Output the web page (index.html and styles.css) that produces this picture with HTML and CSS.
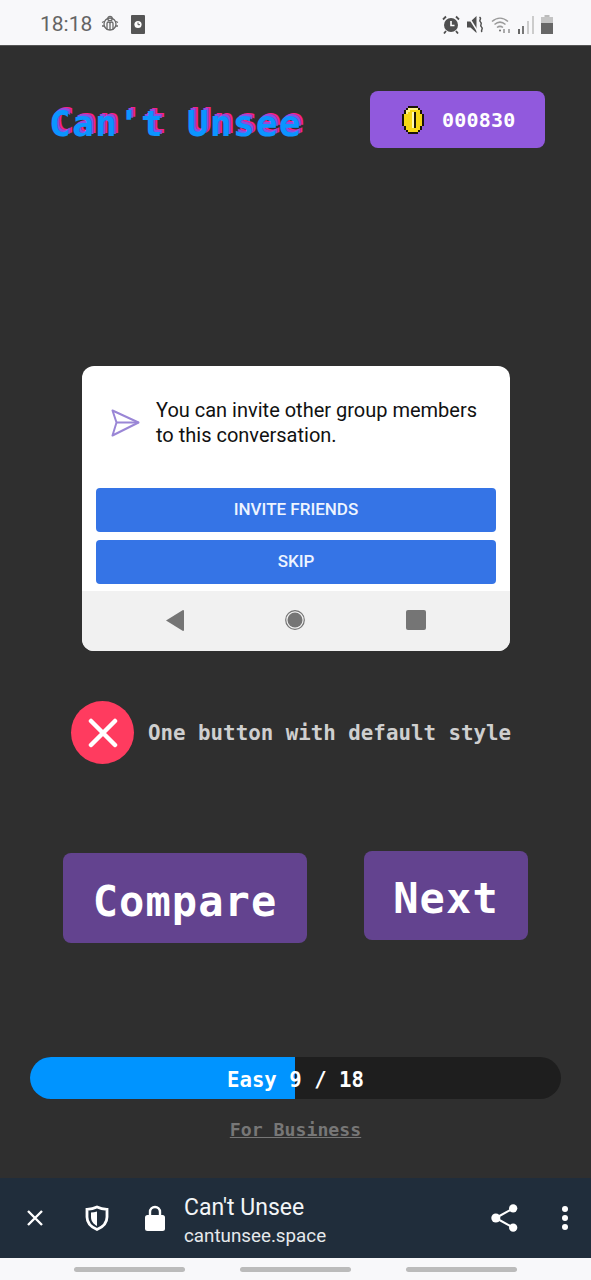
FILE: index.html
```html
<!DOCTYPE html>
<html lang="en">
<head>
  <meta charset="UTF-8">
  <title>Can't Unsee</title>
  <link rel="stylesheet" href="styles.css">
</head>
<body>

<!-- Android status bar -->
<div class="status-bar">
  <span class="hora">18:18</span>
  <svg class="st-gear" width="18" height="18" viewBox="0 0 18 18" fill="none" stroke="#6a6a6a" stroke-width="1.3">
    <circle cx="9" cy="9" r="6"/>
    <circle cx="9" cy="3.5" r="2.2"/>
    <path d="M6 15V8.5a1.5 1.5 0 0 1 3 0a1.5 1.5 0 0 1 3 0V15M9 8.5V15M1 7.5l2-1M1 11l2 0M17 7.5l-2-1M17 11l-2 0"/>
  </svg>
  <svg class="st-clock" width="14" height="19" viewBox="0 0 14 19">
    <rect width="14" height="19" rx="1" fill="#555"/>
    <circle cx="7" cy="9.5" r="3.6" fill="#fff"/>
    <path d="M7 7.5v2.2h2" stroke="#555" stroke-width="1" fill="none"/>
  </svg>
  <div class="st-derecha">
    <svg width="18" height="19" viewBox="0 0 18 19">
      <circle cx="9" cy="10" r="7" fill="#4f4f4f"/>
      <path d="M9 6v4.5h3.5" stroke="#fff" stroke-width="1.6" fill="none"/>
      <path d="M1 4.500L4 1.500M17 4.500L14 1.500M4 16l-2 2.500M14 16l2 2.500" stroke="#4f4f4f" stroke-width="1.800"/>
    </svg>
    <svg width="17" height="19" viewBox="0 0 17 19">
      <path d="M0 6.500h3.500L9.500 1v17L3.500 12.500H0z" fill="#4f4f4f"/>
      <path d="M1 1l10 16" stroke="#f8f8fa" stroke-width="1.500"/>
      <path d="M12.500 2c3 2-1.500 3 1 5s-1.500 3 1 5s-1.500 3 0.500 5" stroke="#4f4f4f" stroke-width="1.500" fill="none"/>
    </svg>
    <svg width="20" height="19" viewBox="0 0 20 19" fill="none" stroke="#9a9a9a" stroke-width="1.500">
      <path d="M1 6.500c5-4.500 11-4.500 16 0M3.500 9.500c3.500-3 7.500-3 11 0M6 12.500c2-1.500 4-1.500 6 0"/>
      <circle cx="9" cy="15.500" r="1" fill="#6a6a6a" stroke="none"/>
      <path d="M13 14v4M18 18v-4" stroke="#777" stroke-width="1.200"/>
    </svg>
    <svg width="16" height="19" viewBox="0 0 16 19">
      <rect x="0" y="14" width="2" height="5" fill="#666"/>
      <rect x="4" y="11" width="2" height="8" fill="#777"/>
      <rect x="9" y="6" width="2" height="13" fill="#ccc"/>
      <rect x="14" y="1" width="2" height="18" fill="#ccc"/>
    </svg>
    <svg width="12" height="19" viewBox="0 0 12 19">
      <rect x="3.500" y="0" width="5" height="3" fill="#bbb"/>
      <rect x="0" y="2" width="12" height="6" fill="#c4c4c4"/>
      <rect x="0" y="8" width="12" height="11" fill="#666"/>
    </svg>
  </div>
</div>

<div class="juego">
  <div class="cabecera">
    <h1 class="logo">Can't Unsee</h1>
    <div class="monedas">
      <svg class="moneda" width="22" height="28" viewBox="0 0 11 14" shape-rendering="crispEdges">
        <path d="M3 0h5v1h1v1h1v2h1v6h-1v2h-1v1h-1v1H3v-1H2v-1H1v-2H0V4h1V2h1V1h1z" fill="#1b1408"/>
        <path d="M3 1h5v1h1v2h1v6h-1v2H8v1H3v-1H2v-2H1V4h1V2h1z" fill="#f7d716"/>
        <path d="M3 1h5v1H4v1H3v1H2V2h1z" fill="#fff38a"/>
        <path d="M5 3h2v8H5z" fill="#1b1408"/>
        <path d="M5 3h1v8H5z" fill="#fff9b0"/>
      </svg>
      <span class="contador">000830</span>
    </div>
  </div>

  <div class="captura">
    <div class="captura-msg">
      <svg class="icono-enviar" width="29" height="28" viewBox="0 0 29 28" fill="none" stroke="#9a86d6" stroke-width="2" stroke-linejoin="round">
        <path d="M1.500 1.500L27.500 13.500L1.500 26.500L5.500 13.500Z"/>
        <path d="M5.500 13.500H27.500"/>
      </svg>
      <p>You can invite other group members to this conversation.</p>
    </div>
    <div class="captura-btn">INVITE FRIENDS</div>
    <div class="captura-btn">SKIP</div>
    <div class="captura-nav">
      <svg width="18" height="21" viewBox="0 0 18 21"><path d="M18 1v19a1 1 0 0 1-1 1L0 10.500 17 0a1 1 0 0 1 1 1z" fill="#757575"/></svg>
      <svg width="20" height="20" viewBox="0 0 20 20"><circle cx="10" cy="10" r="9.300" fill="none" stroke="#757575" stroke-width="1.200"/><circle cx="10" cy="10" r="7.500" fill="#757575"/></svg>
      <svg width="20" height="20" viewBox="0 0 20 20"><rect width="20" height="20" rx="2" fill="#757575"/></svg>
    </div>
  </div>

  <div class="resultado">
    <div class="cruz">
      <svg width="30" height="30" viewBox="0 0 30 30"><path d="M3 3l24 24M27 3L3 27" stroke="#fff" stroke-width="4.500" stroke-linecap="round"/></svg>
    </div>
    <span class="resultado-txt">One button with default style</span>
  </div>

  <div class="acciones">
    <button class="btn btn-compare">Compare</button>
    <button class="btn btn-next">Next</button>
  </div>

  <div class="progreso">
    <div class="progreso-fill" style="width: 49.9%"></div>
    <span class="progreso-txt">Easy 9 / 18</span>
  </div>
  <a class="negocios" href="#">For Business</a>
</div>

<!-- Custom tab toolbar -->
<div class="barra-tab">
  <svg class="tab-x" width="18" height="18" viewBox="0 0 18 18"><path d="M2 2l14 14M16 2L2 16" stroke="#fff" stroke-width="2.400"/></svg>
  <svg class="tab-escudo" width="24" height="26" viewBox="0 0 24 26">
    <path d="M12 2c3 1.600 6 2.300 10 2.300V12c0 6-4 10-10 12.500C6 22 2 18 2 12V4.300C6 4.300 9 3.600 12 2z" fill="none" stroke="#fff" stroke-width="2.800"/>
    <path d="M12 6.500V21c-3.500-2-6-4.800-6-9V7.500c2 0 4-.4 6-1z" fill="#fff"/>
  </svg>
  <svg class="tab-candado" width="20" height="26" viewBox="0 0 20 26">
    <path d="M5 11V7a5 5 0 0 1 10 0v4" fill="none" stroke="#fff" stroke-width="2.400"/>
    <rect y="10" width="20" height="16" rx="2.500" fill="#fff"/>
  </svg>
  <div class="tab-textos">
    <div class="tab-titulo">Can't Unsee</div>
    <div class="tab-url">cantunsee.space</div>
  </div>
  <svg class="tab-share" width="27" height="30" viewBox="0 0 28 30" fill="#fff">
    <circle cx="5" cy="15" r="4.700"/><circle cx="23" cy="5" r="4.300"/><circle cx="23" cy="25" r="4.300"/>
    <path d="M5 15L23 5M5 15l18 10" stroke="#fff" stroke-width="2.200"/>
  </svg>
  <svg class="tab-menu" width="6" height="24" viewBox="0 0 6 24" fill="#fff">
    <circle cx="3" cy="3" r="3"/><circle cx="3" cy="12" r="3"/><circle cx="3" cy="21" r="3"/>
  </svg>
</div>

<div class="barra-gestos">
  <span></span><span></span><span></span>
</div>

</body>
</html>
```

FILE: styles.css
```css
body {
  margin: 0;
  width: 591px;
  height: 1280px;
  overflow: hidden;
  background-color: #2f2f2f;
  font-family: 'DejaVu Sans Mono', monospace;
}

/* status bar */
.status-bar {
  display: flex;
  align-items: center;
  box-sizing: border-box;
  height: 46px;
  padding: 3px 38px 0 40px;
  background-color: #f8f8fa;
  border-bottom: 1px solid #555;
}

.hora {
  font-family: 'Roboto', sans-serif;
  font-size: 21px;
  color: #646464;
}

.st-gear { margin-left: 9px; }
.st-clock { margin-left: 12px; }

.st-derecha {
  display: flex;
  gap: 7px;
  align-items: center;
  margin-left: auto;
}

/* game area */
.juego {
  display: flex;
  flex-direction: column;
  height: 1132px;
}

.cabecera {
  display: flex;
  justify-content: space-between;
  align-items: center;
  padding: 45px 46px 0 49px;
}

.logo {
  margin: 0;
  padding-top: 8px;
  font-size: 36px;
  font-weight: bold;
  letter-spacing: 1.3px;
  color: #0b95ff;
  text-shadow: 2px -2px 0 #8a4fe0, 4px -3px 0 #f5208e;
}

.monedas {
  display: flex;
  align-items: center;
  box-sizing: border-box;
  width: 175px;
  height: 57px;
  padding-left: 32px;
  gap: 18px;
  background-color: #9159dd;
  border-radius: 8px;
}

.contador {
  font-size: 20px;
  font-weight: bold;
  letter-spacing: 0.2px;
  color: #fff;
}

/* screenshot inside the card */
.captura {
  box-sizing: border-box;
  width: 428px;
  height: 285px;
  margin: 218px 0 0 82px;
  padding-top: 122px;
  position: relative;
  display: flex;
  flex-direction: column;
  align-items: center;
  gap: 8px;
  background-color: #fff;
  border-radius: 12px;
  overflow: hidden;
}

.captura-msg {
  display: flex;
  position: absolute;
  top: 32px;
  left: 29px;
  gap: 16px;
}

.icono-enviar { margin-top: 11px; }

.captura-msg p {
  margin: 0;
  width: 335px;
  font-family: 'Roboto', sans-serif;
  font-size: 20px;
  line-height: 25px;
  color: #111;
}

.captura-btn {
  width: 400px;
  height: 44px;
  line-height: 43px;
  text-align: center;
  font-family: 'Roboto', sans-serif;
  font-size: 17px;
  font-weight: 500;
  color: #eef4ff;
  background-color: #3574e6;
  border-radius: 4px;
}

.captura-nav {
  display: flex;
  align-items: center;
  box-sizing: border-box;
  width: 100%;
  height: 60px;
  margin-top: -1px;
  padding: 0 0 2px 84px;
  gap: 101px;
  background-color: #f1f1f1;
}

/* answer line */
.resultado {
  display: flex;
  align-items: center;
  margin: 50px 0 0 71px;
  gap: 14px;
}

.cruz {
  display: flex;
  justify-content: center;
  align-items: center;
  width: 63px;
  height: 63px;
  background-color: #ff3b5f;
  border-radius: 50%;
}

.resultado-txt {
  font-size: 20.8px;
  font-weight: bold;
  color: #cfcfcf;
}

/* buttons */
.acciones {
  display: flex;
  align-items: flex-start;
  gap: 57px;
  margin: 87px 0 0 63px;
}

.btn {
  border: none;
  border-radius: 8px;
  padding: 6px 0 0;
  background-color: #63438f;
  color: #fff;
  font-family: 'DejaVu Sans Mono', monospace;
  font-size: 42px;
  font-weight: bold;
  letter-spacing: 1.1px;
}

.btn-compare {
  width: 244px;
  height: 90px;
  margin-top: 2px;
}

.btn-next {
  width: 164px;
  height: 89px;
}

/* progress */
.progreso {
  position: relative;
  display: flex;
  justify-content: center;
  align-items: center;
  box-sizing: border-box;
  width: 531px;
  height: 42px;
  margin: 114px 0 0 30px;
  padding-top: 3px;
  background-color: #1e1e1e;
  border-radius: 21px;
  overflow: hidden;
}

.progreso-fill {
  position: absolute;
  top: 0;
  left: 0;
  height: 100%;
  background-color: #0094ff;
}

.progreso-txt {
  position: relative;
  font-size: 20.7px;
  font-weight: bold;
  color: #fff;
}

.negocios {
  align-self: center;
  margin-top: 20px;
  font-size: 18.2px;
  font-weight: bold;
  color: #777;
}

/* browser toolbar */
.barra-tab {
  display: flex;
  align-items: center;
  box-sizing: border-box;
  height: 80px;
  padding: 0 23px 0 26px;
  background-color: #202d3b;
}

.tab-escudo { margin-left: 41px; }
.tab-candado { margin-left: 36px; }
.tab-textos { margin-left: 19px; padding-top: 6px; }

.tab-titulo {
  font-family: 'Roboto', sans-serif;
  font-size: 23px;
  line-height: 30px;
  color: #f3f5f7;
}

.tab-url {
  font-family: 'Roboto', sans-serif;
  font-size: 18.8px;
  line-height: 27px;
  color: #e6e9ec;
}

.tab-share { margin-left: auto; }
.tab-menu { margin-left: 44px; }

.barra-gestos {
  display: flex;
  justify-content: center;
  align-items: center;
  gap: 55px;
  height: 22px;
  background-color: #f8f8fa;
}

.barra-gestos span {
  width: 111px;
  height: 5px;
  background-color: #bbb;
  border-radius: 3px;
}
```
